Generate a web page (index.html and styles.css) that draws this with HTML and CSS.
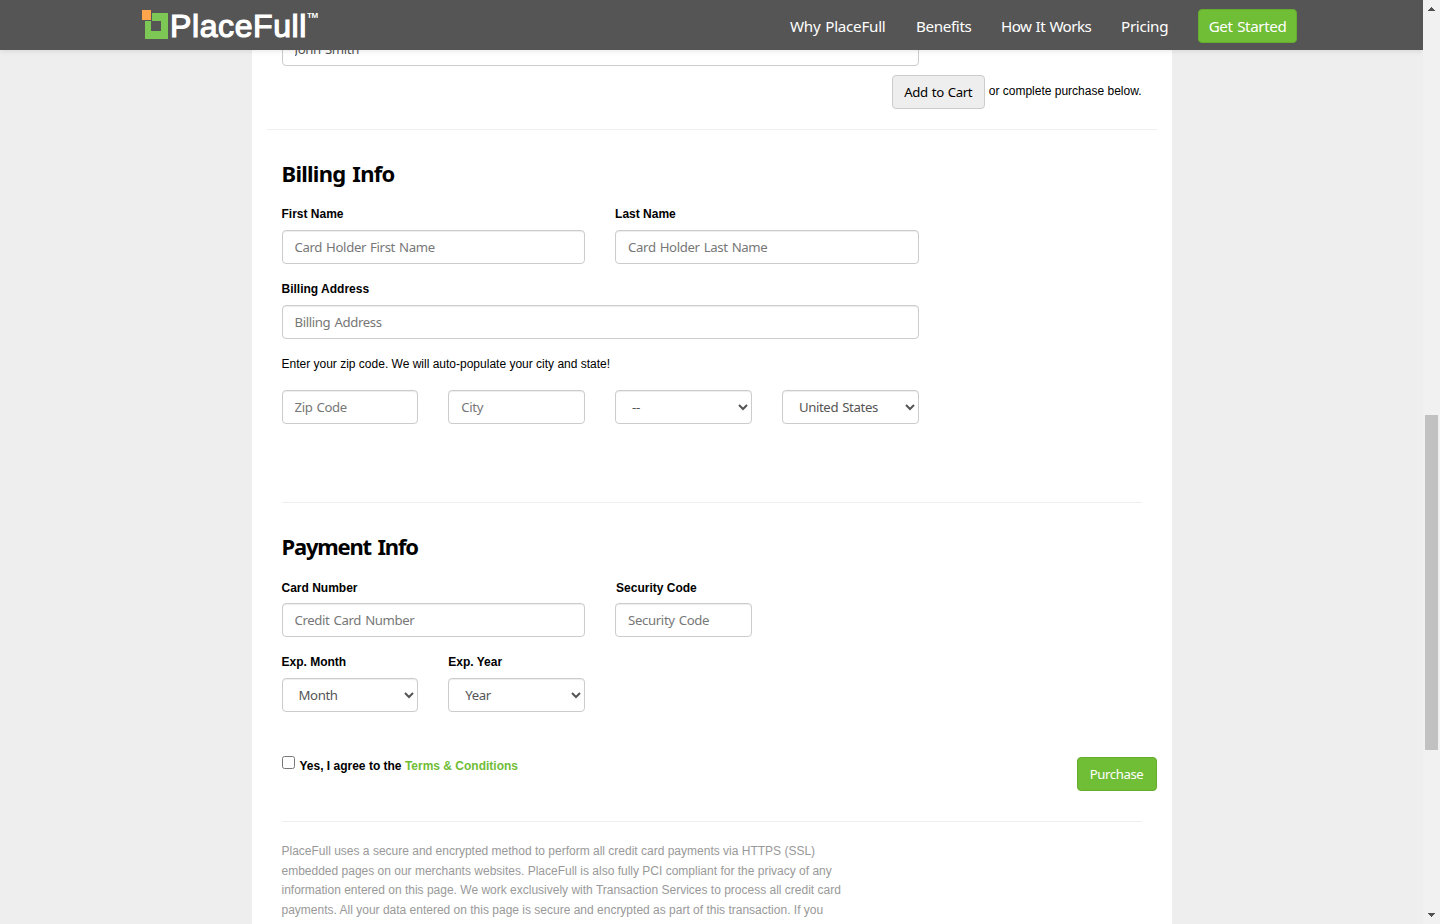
FILE: index.html
```html
<!DOCTYPE html>
<html lang="en">
<head>
<meta charset="utf-8">
<title>PlaceFull</title>
<link rel="stylesheet" href="styles.css">
</head>
<body>
<div class="viewport">
  <div class="page">
    <header class="navbar">
      <div class="brand">
        <svg class="brand-mark" width="27" height="31" viewBox="0 0 27 31"><path fill="#7dc855" fill-rule="evenodd" d="M3 4h23v26H3zM9 12v10h10V12z"/><path fill="#555" d="M0 1h10v11H0z"/><path fill="#ffa64d" d="M0 1h9v10H0z"/></svg>
        <span class="brand-name">PlaceFull</span><span class="brand-tm">TM</span>
      </div>
      <nav class="nav">
        <a class="n1">Why PlaceFull</a><a class="n2">Benefits</a><a class="n3">How It Works</a><a class="n4">Pricing</a>
        <a class="nav-cta">Get Started</a>
      </nav>
    </header>
    <main class="panel">
      <div class="attendee"><input class="field" type="text" value="John Smith"></div>
      <div class="cart"><button class="btn btn-cart">Add to Cart</button><span class="cart-note">or complete purchase below.</span></div>
      <section class="billing">
        <h2 class="title-billing">Billing Info</h2>
        <div class="grid">
          <div class="half"><label>First Name</label><input class="field" placeholder="Card Holder First Name"></div>
          <div class="half"><label>Last Name</label><input class="field" placeholder="Card Holder Last Name"></div>
          <div class="full"><label>Billing Address</label><input class="field" placeholder="Billing Address"></div>
        </div>
        <p class="hint">Enter your zip code. We will auto-populate your city and state!</p>
        <div class="grid">
          <input class="field" placeholder="Zip Code"><input class="field" placeholder="City">
          <select class="field"><option>--</option></select>
          <select class="field"><option>United States</option></select>
        </div>
      </section>
      <section class="payment">
        <h2 class="title-payment">Payment Info</h2>
        <div class="grid card">
          <div class="half"><label>Card Number</label><input class="field" placeholder="Credit Card Number"></div>
          <div><label class="label-code">Security Code</label><input class="field" placeholder="Security Code"></div>
        </div>
        <div class="grid expiry">
          <div><label>Exp. Month</label><select class="field"><option>Month</option></select></div>
          <div><label>Exp. Year</label><select class="field"><option>Year</option></select></div>
        </div>
        <div class="submit">
          <div class="agree"><input type="checkbox"><span class="agree-text">Yes, I agree to the <a>Terms &amp; Conditions</a></span></div>
          <button class="btn btn-buy">Purchase</button>
        </div>
      </section>
      <p class="legal">PlaceFull uses a secure and encrypted method to perform all credit card payments via HTTPS (SSL)<br>embedded pages on our merchants websites. PlaceFull is also fully PCI compliant for the privacy of any<br>information entered on this page. We work exclusively with Transaction Services to process all credit card<br>payments. All your data entered on this page is secure and encrypted as part of this transaction. If you</p>
    </main>
  </div>
  <div class="scrollbar">
    <svg width="17" height="17"><path fill="#505050" d="M5 11h7v-1h-1v-1h-1v-1H9v-1H8v1H7v1H6v1H5z"/></svg>
    <div class="thumb"></div>
    <svg class="down" width="17" height="17"><path fill="#505050" d="M5 6h7v1h-1v1h-1v1H9v1H8V9H7V8H6V7H5z"/></svg>
  </div>
</div>
</body>
</html>
```
FILE: styles.css
```css
* { box-sizing: border-box; }
body { margin: 0; background: #eee; color: #000; font: 12px/20px "Liberation Sans", Arial, sans-serif; }
.viewport { display: flex; height: 924px; overflow: hidden; }
.page { position: relative; width: 1423px; height: 924px; overflow: hidden; }
.navbar { position: absolute; top: 0; left: 0; z-index: 2; width: 100%; height: 50px; padding: 0 126px 0 142px; background: #555; box-shadow: 0 1px 5px rgba(0,0,0,.1); display: flex; justify-content: space-between; color: #fff; }
.brand { display: flex; align-items: flex-start; padding-top: 9px; }
.brand-name { margin-left: 1px; width: 138px; font: 32px/34px "Liberation Sans", Arial, sans-serif; letter-spacing: .6px; -webkit-text-stroke: 1.2px #fff; }
.brand-tm { margin: 1px 0 0 -1px; font: bold 8px/11px "Liberation Sans", Arial, sans-serif; letter-spacing: -.3px; }
.nav { display: flex; align-items: center; gap: 30px; padding-top: 2px; font: 15.2px/34px "Noto Sans", sans-serif; word-spacing: 1px; white-space: nowrap; }
.n1 { width: 96px; letter-spacing: -.25px; }
.n2 { width: 55px; letter-spacing: -.35px; }
.n3 { width: 90px; letter-spacing: -.6px; }
.n4 { width: 47px; letter-spacing: -.3px; }
.nav-cta { width: 99px; height: 34px; border: 1px solid #66ad2f; border-radius: 4px; background: #70bd36; text-align: center; line-height: 33px; letter-spacing: -.4px; }
.panel { width: 920px; height: 924px; margin-left: 251.5px; padding: 32px 15px 0; background: #fff; overflow: hidden; }
.attendee { width: 667.2px; padding: 0 15px; }
.field { display: block; width: 100%; height: 34px; margin: 0; padding: 6px 12px; border: 1px solid #ccc; border-radius: 4px; background: #fff; box-shadow: inset 0 1px 1px rgba(0,0,0,.075); color: #555; font: 13.2px/20px "Noto Sans", sans-serif; letter-spacing: -.37px; word-spacing: 1px; }
select.field { padding-right: 0; }
.field::placeholder { color: #777; opacity: 1; }
.btn { height: 34px; padding: 0 0 1px; border: 1px solid #ccc; border-radius: 4px; background: #eee; font: 13.2px/20px "Noto Sans", sans-serif; letter-spacing: -.4px; word-spacing: 1px; white-space: nowrap; }
.btn-cart { width: 93px; }
.btn-buy { width: 80px; margin-top: 1px; border-color: #66ad2f; background: #70bd36; color: #fff; }
.cart { display: flex; justify-content: flex-end; align-items: flex-start; gap: 4px; height: 55px; margin-top: 9px; padding-right: 15px; border-bottom: 1px solid #eee; white-space: nowrap; }
.cart-note { padding-top: 6px; }
.billing, .payment { margin: 0 15px; border-bottom: 1px solid #eee; }
.billing { height: 373px; padding-top: 30px; }
.payment { height: 319px; padding-top: 30px; }
h2 { margin: 0; font: bold 22px/26px "Noto Sans", sans-serif; letter-spacing: -.75px; word-spacing: 2px; }
.title-payment { letter-spacing: -1.2px; }
.grid { display: grid; grid-template-columns: repeat(4, 1fr); column-gap: 30px; row-gap: 15px; width: 637.2px; margin-top: 18px; }
.half { grid-column: span 2; }
.full { grid-column: span 4; }
label { display: block; height: 26px; line-height: 20px; font-weight: bold; }
.hint { margin: 15px 0 0; }
.hint + .grid { margin-top: 16px; }
.card { margin-top: 19px; }
.card label { height: 25px; }
.label-code { padding-left: 1px; }
.expiry { margin-top: 15px; }
.submit { display: flex; justify-content: space-between; margin: 44px -15px 0 0; }
.agree { display: flex; gap: 5px; font-weight: bold; }
.agree input { width: 13px; height: 13px; margin: 0; }
.agree a { color: #70bd36; }
.legal { margin: 20px 15px 0; color: #999; line-height: 19.6px; white-space: nowrap; }
.scrollbar { width: 17px; height: 924px; background: #f1f1f1; display: flex; flex-direction: column; align-items: center; }
.scrollbar svg { flex: none; }
.thumb { width: 13px; height: 335px; margin-top: 398px; background: #c1c1c1; }
.down { margin-top: auto; }
```
